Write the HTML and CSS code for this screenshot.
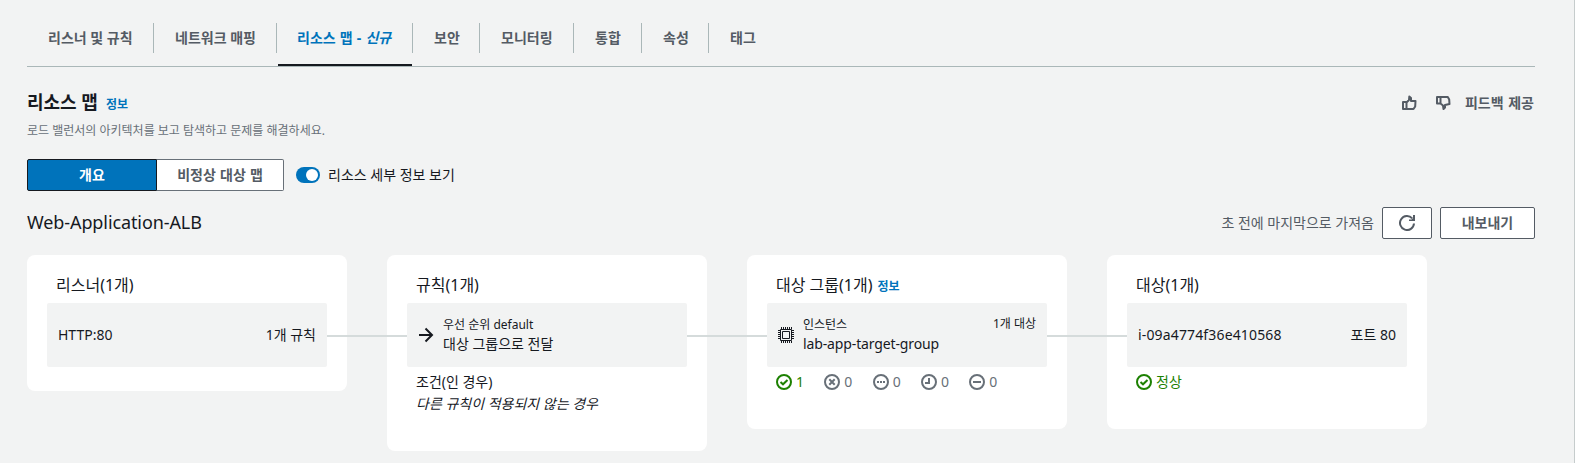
FILE: index.html
```html
<!DOCTYPE html>
<html lang="ko">
<head>
<meta charset="utf-8">
<title>리소스 맵</title>
<link rel="stylesheet" href="styles.css">
</head>
<body>
<main class="page">
  <nav class="tabs">
    <a class="tab tab-listeners"><span>리스너 및 규칙</span></a>
    <a class="tab tab-network"><span>네트워크 매핑</span></a>
    <a class="tab tab-map active"><span>리소스 맵 - <i>신규</i></span></a>
    <a class="tab tab-short"><span>보안</span></a>
    <a class="tab tab-monitor"><span>모니터링</span></a>
    <a class="tab tab-mid"><span>통합</span></a>
    <a class="tab tab-short"><span>속성</span></a>
    <a class="tab tab-last"><span>태그</span></a>
  </nav>

  <header class="header">
    <div class="heading"><h1>리소스 맵</h1><a class="info">정보</a></div>
    <div class="feedback">
      <svg class="icon" viewBox="0 0 16 16"><path d="M2 7h3.500v7H2zM5.500 7.500L8 5l.3-3.500L10 3v3h4.500l-.3 5.500L12.500 14h-7" stroke-linejoin="round"/></svg>
      <svg class="icon down" viewBox="0 0 16 16"><path d="M2 2h3.500v6.500H2zM5.500 2h7.300l1.400 2.500.3 4.500L10 10v2.500L8.500 14 8 10.500 5.500 8.500" stroke-linejoin="round"/></svg>
      <span>피드백 제공</span>
    </div>
  </header>
  <p class="description">로드 밸런서의 아키텍처를 보고 탐색하고 문제를 해결하세요.</p>

  <div class="controls">
    <div class="segment selected">개요</div>
    <div class="segment other">비정상 대상 맵</div>
    <div class="toggle"><div class="knob"></div></div>
    <span class="toggle-label">리소스 세부 정보 보기</span>
  </div>

  <div class="toolbar">
    <h2>Web-Application-ALB</h2>
    <div class="actions">
      <span class="fetched">초 전에 마지막으로 가져옴</span>
      <button class="button refresh"><svg class="icon" viewBox="0 0 16 16"><path d="M15 8.500A7 7 0 1 1 13.200 3.300"/><path class="solid" d="M16 0v6h-6V4.500h2.500L14 3V0z"/></svg></button>
      <button class="button export">내보내기</button>
    </div>
  </div>

  <section class="map">
    <article class="card listener">
      <h3>리스너(1개)</h3>
      <div class="box"><span>HTTP:80</span><span class="end">1개 규칙</span></div>
    </article>
    <article class="card rule">
      <h3>규칙(1개)</h3>
      <div class="box">
        <svg class="icon arrow" viewBox="0 0 16 16"><path d="M1 8h13M7.500 1.500L14 8l-6.500 6.500"/></svg>
        <div class="lines"><small>우선 순위 default</small><span>대상 그룹으로 전달</span></div>
      </div>
      <div class="condition"><span>조건(인 경우)</span><i>다른 규칙이 적용되지 않는 경우</i></div>
    </article>
    <article class="card group">
      <h3>대상 그룹(1개)<a class="info">정보</a></h3>
      <div class="box">
        <svg class="icon chip" viewBox="0 0 16 16"><path d="M2.500 2.500h11v11h-11zM4.500 4.500h7v7h-7z"/><path d="M3.500 0v2M5.500 0v2M7.500 0v2M9.500 0v2M11.500 0v2M13.500 0v2M3.500 14v2M5.500 14v2M7.500 14v2M9.500 14v2M11.500 14v2M13.500 14v2M0 3.500h2M0 5.500h2M0 7.500h2M0 9.500h2M0 11.500h2M14 3.500h2M14 5.500h2M14 7.500h2M14 9.500h2M14 11.500h2"/></svg>
        <div class="lines"><small>인스턴스</small><span class="group-name">lab-app-target-group</span></div>
        <small class="end top">1개 대상</small>
      </div>
      <div class="statuses">
        <span class="status ok"><svg class="icon" viewBox="0 0 16 16"><circle cx="8" cy="8" r="7"/><path d="M4.500 8l2.500 2.300 4.500-4.300"/></svg>1</span>
        <span class="status"><svg class="icon" viewBox="0 0 16 16"><circle cx="8" cy="8" r="7"/><path d="M5.300 5.300l5.400 5.400M10.700 5.300l-5.400 5.400"/></svg>0</span>
        <span class="status"><svg class="icon" viewBox="0 0 16 16"><circle cx="8" cy="8" r="7"/><path d="M4 8h2M7 8h2M10 8h2"/></svg>0</span>
        <span class="status"><svg class="icon" viewBox="0 0 16 16"><circle cx="8" cy="8" r="7"/><path d="M8 4v5H4"/></svg>0</span>
        <span class="status"><svg class="icon" viewBox="0 0 16 16"><circle cx="8" cy="8" r="7"/><path d="M4 8h8"/></svg>0</span>
      </div>
    </article>
    <article class="card target">
      <h3>대상(1개)</h3>
      <div class="box"><span class="instance">i-09a4774f36e410568</span><span class="end">포트 80</span></div>
      <div class="statuses">
        <span class="status ok"><svg class="icon" viewBox="0 0 16 16"><circle cx="8" cy="8" r="7"/><path d="M4.500 8l2.500 2.300 4.500-4.300"/></svg>정상</span>
      </div>
    </article>
  </section>
</main>
</body>
</html>
```
FILE: styles.css
```css
* { box-sizing: border-box; }
body {
  margin: 0;
  background: #fff;
  color: #16191f;
  font: 14px/22px "Noto Sans", "Noto Sans CJK KR", sans-serif;
  overflow: hidden;
}
h1, h2, h3, p { margin: 0; }
.page {
  width: 1575px;
  height: 463px;
  padding: 16px 39px 0 27px;
  background: #f2f3f3;
  border-right: 1px solid #c6cccc;
}
.icon {
  width: 16px;
  height: 16px;
  flex: none;
  fill: none;
  stroke: currentColor;
  stroke-width: 2;
}
.solid { fill: currentColor; stroke: none; }

.tabs {
  display: flex;
  height: 51px;
  border-bottom: 1px solid #aab7b8;
  color: #545b64;
  font-weight: 700;
}
.tab { height: 50px; padding-top: 7px; white-space: nowrap; }
.tab span {
  display: block;
  height: 30px;
  line-height: 30px;
  padding-left: 21px;
  border-right: 1px solid #aab7b8;
}
.tab-listeners { width: 127px; }
.tab-network { width: 123px; }
.tab-map { width: 136px; }
.tab-short { width: 67px; }
.tab-monitor { width: 94px; }
.tab-mid { width: 68px; }
.tab-last { width: 68px; }
.tab-last span { border: 0; }
.tab-map span { padding-left: 20px; word-spacing: 0.5px; }
.active {
  color: #0073bb;
  background: linear-gradient(#16191f, #16191f) 1px 48px / 134px 2px no-repeat;
}

.header { display: flex; justify-content: space-between; height: 50px; padding-top: 21px; }
.heading { display: flex; align-items: baseline; gap: 8px; }
h1 { font-size: 18px; line-height: 28px; }
.info { color: #0073bb; font-size: 12px; font-weight: 700; }
.feedback {
  display: flex;
  align-items: center;
  height: 30px;
  padding-right: 1px;
  color: #545b64;
  font-weight: 700;
  word-spacing: 1px;
}
.feedback .down { margin: 0 14px 0 18px; }
.description { height: 42px; padding-top: 3px; color: #687078; font-size: 12px; }

.controls { display: flex; align-items: center; height: 32px; }
.segment {
  height: 32px;
  line-height: 30px;
  text-align: center;
  font-weight: 700;
  border: 1px solid #687078;
}
.selected {
  width: 130px;
  background: #0073bb;
  color: #fff;
  border-color: #16191f;
  border-radius: 2px 0 0 2px;
}
.other {
  width: 127px;
  background: #fff;
  color: #545b64;
  border-left: 0;
  border-radius: 0 2px 2px 0;
  word-spacing: 0.5px;
}
.toggle {
  display: flex;
  justify-content: flex-end;
  align-items: center;
  width: 24px;
  height: 16px;
  margin: 0 8px 0 12px;
  padding-right: 2px;
  border-radius: 8px;
  background: #0073bb;
}
.knob { width: 12px; height: 12px; border-radius: 50%; background: #fff; }

.toolbar {
  display: flex;
  align-items: center;
  justify-content: space-between;
  height: 32px;
  margin-top: 16px;
}
h2 {
  padding-bottom: 2px;
  font-size: 18px;
  font-weight: 400;
  line-height: 28px;
  letter-spacing: -0.1px;
}
.actions { display: flex; align-items: center; gap: 8px; color: #545b64; }
.button {
  display: flex;
  align-items: center;
  justify-content: center;
  height: 32px;
  padding: 0;
  border: 1px solid #545b64;
  border-radius: 2px;
  background: #fff;
  color: #545b64;
  font: inherit;
  font-weight: 700;
}
.refresh { width: 50px; }
.export { width: 95px; }

.map { display: flex; align-items: flex-start; gap: 40px; margin-top: 16px; }
.card {
  position: relative;
  width: 320px;
  padding: 16px 20px 0;
  border-radius: 8px;
  background: #fff;
}
.listener { height: 136px; }
.rule { height: 196px; }
.group, .target { height: 174px; }
.card:not(:last-child)::after {
  content: "";
  position: absolute;
  z-index: 1;
  left: 300px;
  top: 80px;
  width: 80px;
  height: 2px;
  background: #d5dbdb;
}
h3 {
  height: 32px;
  padding-left: 9px;
  font-size: 16px;
  font-weight: 400;
  line-height: 28px;
}
h3 .info { margin-left: 5px; }
.box {
  display: flex;
  align-items: center;
  height: 64px;
  padding: 0 11px;
  border-radius: 2px;
  background: #f2f3f3;
}
.end { margin-left: auto; }
small { font-size: 12px; line-height: 18px; }
.lines { display: flex; flex-direction: column; padding: 0 0 1px 9px; }
.lines span { line-height: 20px; }
.group-name { letter-spacing: -0.13px; }
.instance { letter-spacing: 0.15px; }
.top { align-self: flex-start; margin-top: 12px; }
.chip { stroke-width: 1; }
.condition { display: flex; flex-direction: column; padding: 4px 9px; }
.statuses { display: flex; gap: 20.300px; padding: 4px 9px; color: #687078; }
.status { display: flex; align-items: center; gap: 4px; }
.ok { color: #1d8102; }
```
